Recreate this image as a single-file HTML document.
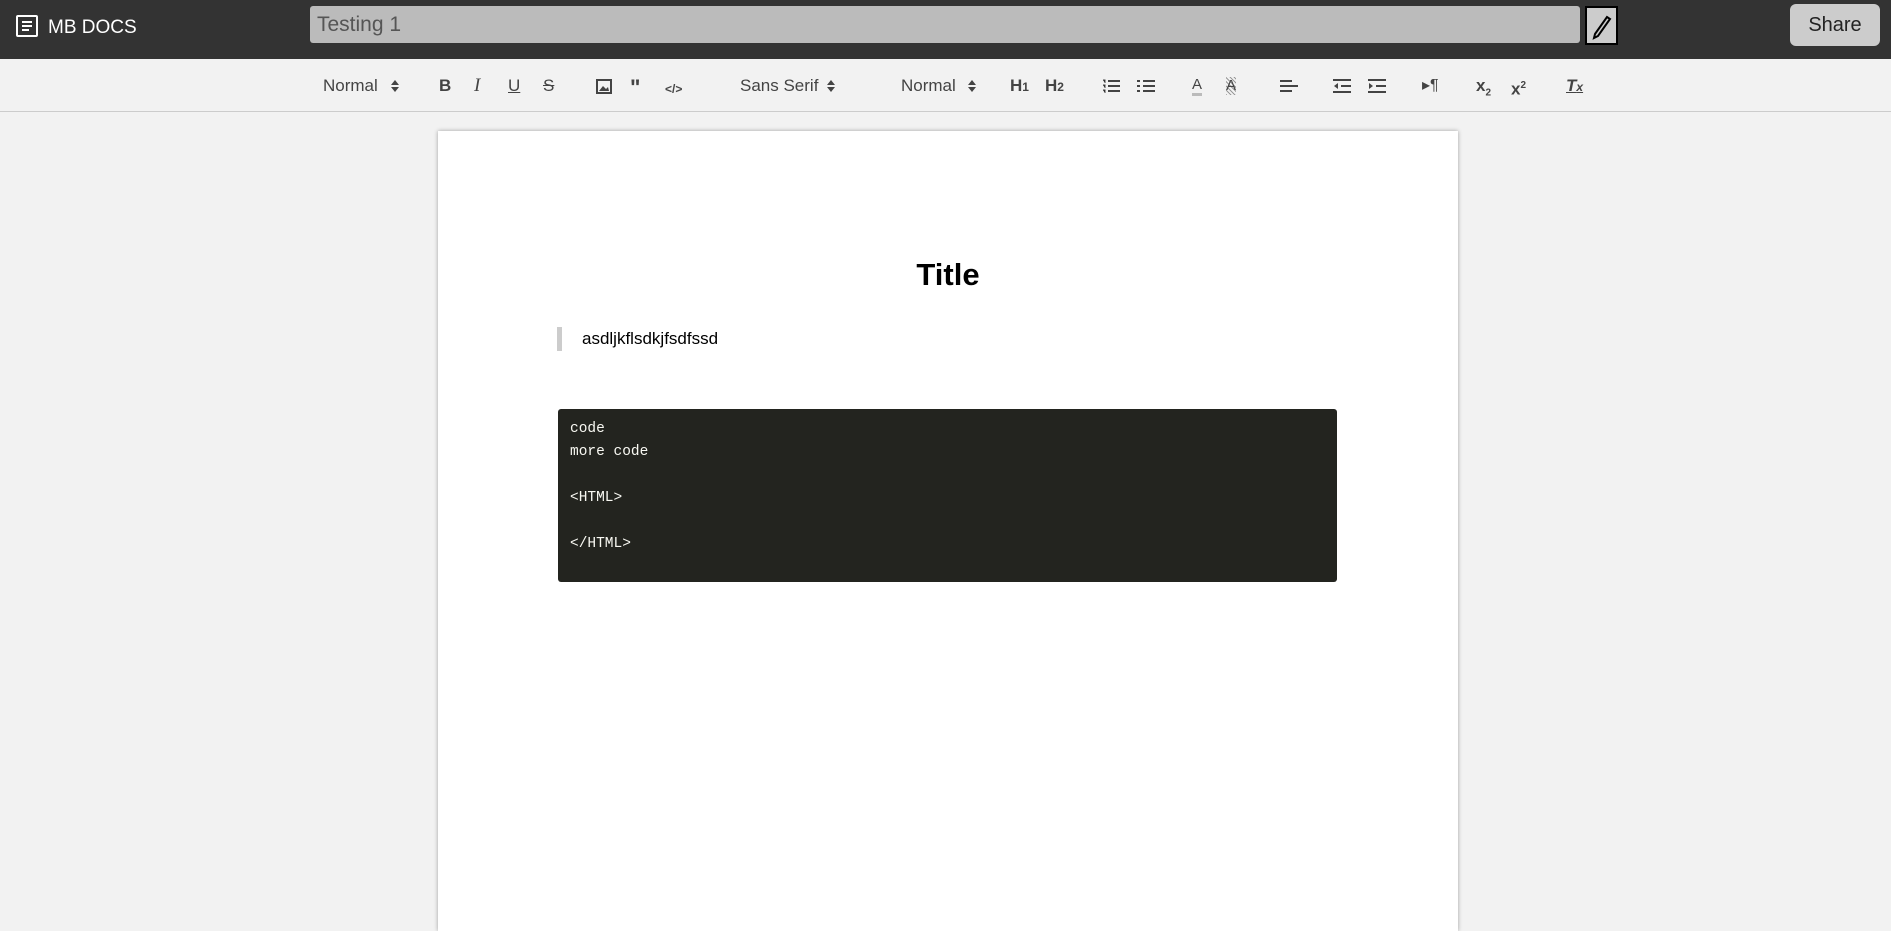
<!DOCTYPE html>
<html><head><meta charset="utf-8">
<style>
*{margin:0;padding:0;box-sizing:border-box}
html,body{width:1891px;height:920px;overflow:hidden;background:#f2f2f2;font-family:"Liberation Sans",sans-serif}
.hdr{position:absolute;left:0;top:0;width:1891px;height:59px;background:#333}
.logo{position:absolute;left:16px;top:15px;width:22px;height:22px;border:2px solid #fff;border-radius:2px}
.logo i{position:absolute;left:4px;height:2px;background:#fff}
.brand{position:absolute;left:48px;top:17px;color:#fff;font-size:19px}
.title{position:absolute;left:310px;top:6px;width:1270px;height:37px;background:#bbb;border-radius:3px;color:#555;font-size:21px;padding:7px 7px}
.pen{position:absolute;left:1585px;top:6px;width:33px;height:39px;background:#ccc;border:2px solid #000}
.share{position:absolute;left:1790px;top:4px;width:90px;height:42px;background:#ccc;border-radius:6px;font-size:20px;color:#222;text-align:center;line-height:42px}
.tb{position:absolute;left:0;top:59px;width:1891px;height:53px;background:#f2f2f2;border-bottom:1px solid #ccc}
.t{position:absolute;top:18px;font-size:17px;color:#444;line-height:18px}
.b{font-weight:bold}
.arr{position:absolute;top:20px;width:8px;height:14px}
.arr:before{content:"";position:absolute;left:0;top:1px;border:4px solid transparent;border-bottom:5px solid #444;border-top:0}
.arr:after{content:"";position:absolute;left:0;top:8px;border:4px solid transparent;border-top:5px solid #444;border-bottom:0}
.page{position:absolute;left:438px;top:131px;width:1020px;height:800px;background:#fff;box-shadow:0 0 4px rgba(0,0,0,.35)}
h1{position:absolute;left:0;width:100%;top:126px;text-align:center;font-size:31px;font-weight:bold;color:#000}
.bq{position:absolute;left:119px;top:196px;border-left:5px solid #ccc;padding-left:20px;height:24px;font-size:17px;line-height:24px;color:#000}
.code{position:absolute;left:120px;top:278px;width:779px;height:173px;background:#23241f;border-radius:3px;color:#f8f8f2;font-family:"Liberation Mono","DejaVu Sans Mono",monospace;font-size:14.5px;line-height:23px;padding:9px 12px;white-space:pre}
svg{position:absolute}
</style></head><body>
<div class="hdr">
 <div class="logo"><i style="top:4px;width:10px"></i><i style="top:8px;width:10px"></i><i style="top:12px;width:7px"></i></div>
 <div class="brand">MB DOCS</div>
 <div class="title">Testing 1</div>
 <div class="pen"><svg width="29" height="35" viewBox="0 0 29 35"><path d="M8 26 L20 9 L23 11 L11 28 L7 30 Z" fill="none" stroke="#000" stroke-width="2"/></svg></div>
 <div class="share">Share</div>
</div>
<div class="tb">
 <span class="t" style="left:323px">Normal</span><span class="arr" style="left:391px"></span>
 <span class="t b" style="left:439px">B</span>
 <span class="t" style="left:474px;font-style:italic;font-family:'Liberation Serif',serif;font-size:19px">I</span>
 <span class="t" style="left:508px;text-decoration:underline">U</span>
 <span class="t" style="left:543px;text-decoration:line-through">S</span>
 <svg style="left:596px;top:20px" width="16" height="15"><rect x="1" y="1" width="14" height="13" fill="none" stroke="#444" stroke-width="2"/><path d="M3 12 L7 7 L10 10 L12 8 L13 12Z" fill="#444"/></svg>
 <span class="t b" style="left:630px;font-size:22px;top:20px">"</span>
 <span class="t b" style="left:665px;font-size:12px;top:21px">&lt;/&gt;</span>
 <span class="t" style="left:740px">Sans Serif</span><span class="arr" style="left:827px"></span>
 <span class="t" style="left:901px">Normal</span><span class="arr" style="left:968px"></span>
 <span class="t b" style="left:1010px">H<small style="font-size:12px">1</small></span>
 <span class="t b" style="left:1045px">H<small style="font-size:12px">2</small></span>
 <svg style="left:1102px;top:19px" width="18" height="16"><path d="M6 3H18M6 8H18M6 13H18" stroke="#444" stroke-width="2"/><path d="M1 2h2v3M1 7h2v3M1 12h2v3" stroke="#444" stroke-width="1"/></svg>
 <svg style="left:1137px;top:19px" width="18" height="16"><path d="M6 3H18M6 8H18M6 13H18M0 3h3M0 8h3M0 13h3" stroke="#444" stroke-width="2"/></svg>
 <span class="t" style="left:1192px;font-size:15px;border-bottom:3px solid #bbb;line-height:16px">A</span>
 <span class="t" style="left:1226px;font-size:15px;background:repeating-linear-gradient(45deg,#999 0 1px,transparent 1px 3px);line-height:18px">A</span>
 <svg style="left:1280px;top:20px" width="18" height="14"><path d="M0 2H12M0 7H18M0 12H12" stroke="#444" stroke-width="2"/></svg>
 <svg style="left:1333px;top:20px" width="18" height="14"><path d="M0 1H18M8 7H18M0 13H18" stroke="#444" stroke-width="2"/><path d="M1 7L5 4V10Z" fill="#444"/></svg>
 <svg style="left:1368px;top:20px" width="18" height="14"><path d="M0 1H18M8 7H18M0 13H18" stroke="#444" stroke-width="2"/><path d="M5 7L1 4V10Z" fill="#444"/></svg>
 <span class="t" style="left:1422px;font-size:16px">▸¶</span>
 <span class="t b" style="left:1476px">x<sub style="font-size:10px">2</sub></span>
 <span class="t b" style="left:1511px">x<sup style="font-size:10px">2</sup></span>
 <span class="t b" style="left:1566px;font-style:italic;text-decoration:underline">T<small style="font-size:12px">x</small></span>
</div>
<div class="page">
 <h1>Title</h1>
 <div class="bq">asdljkflsdkjfsdfssd</div>
 <div class="code">code
more code

&lt;HTML&gt;

&lt;/HTML&gt;</div>
</div>
</body></html>
